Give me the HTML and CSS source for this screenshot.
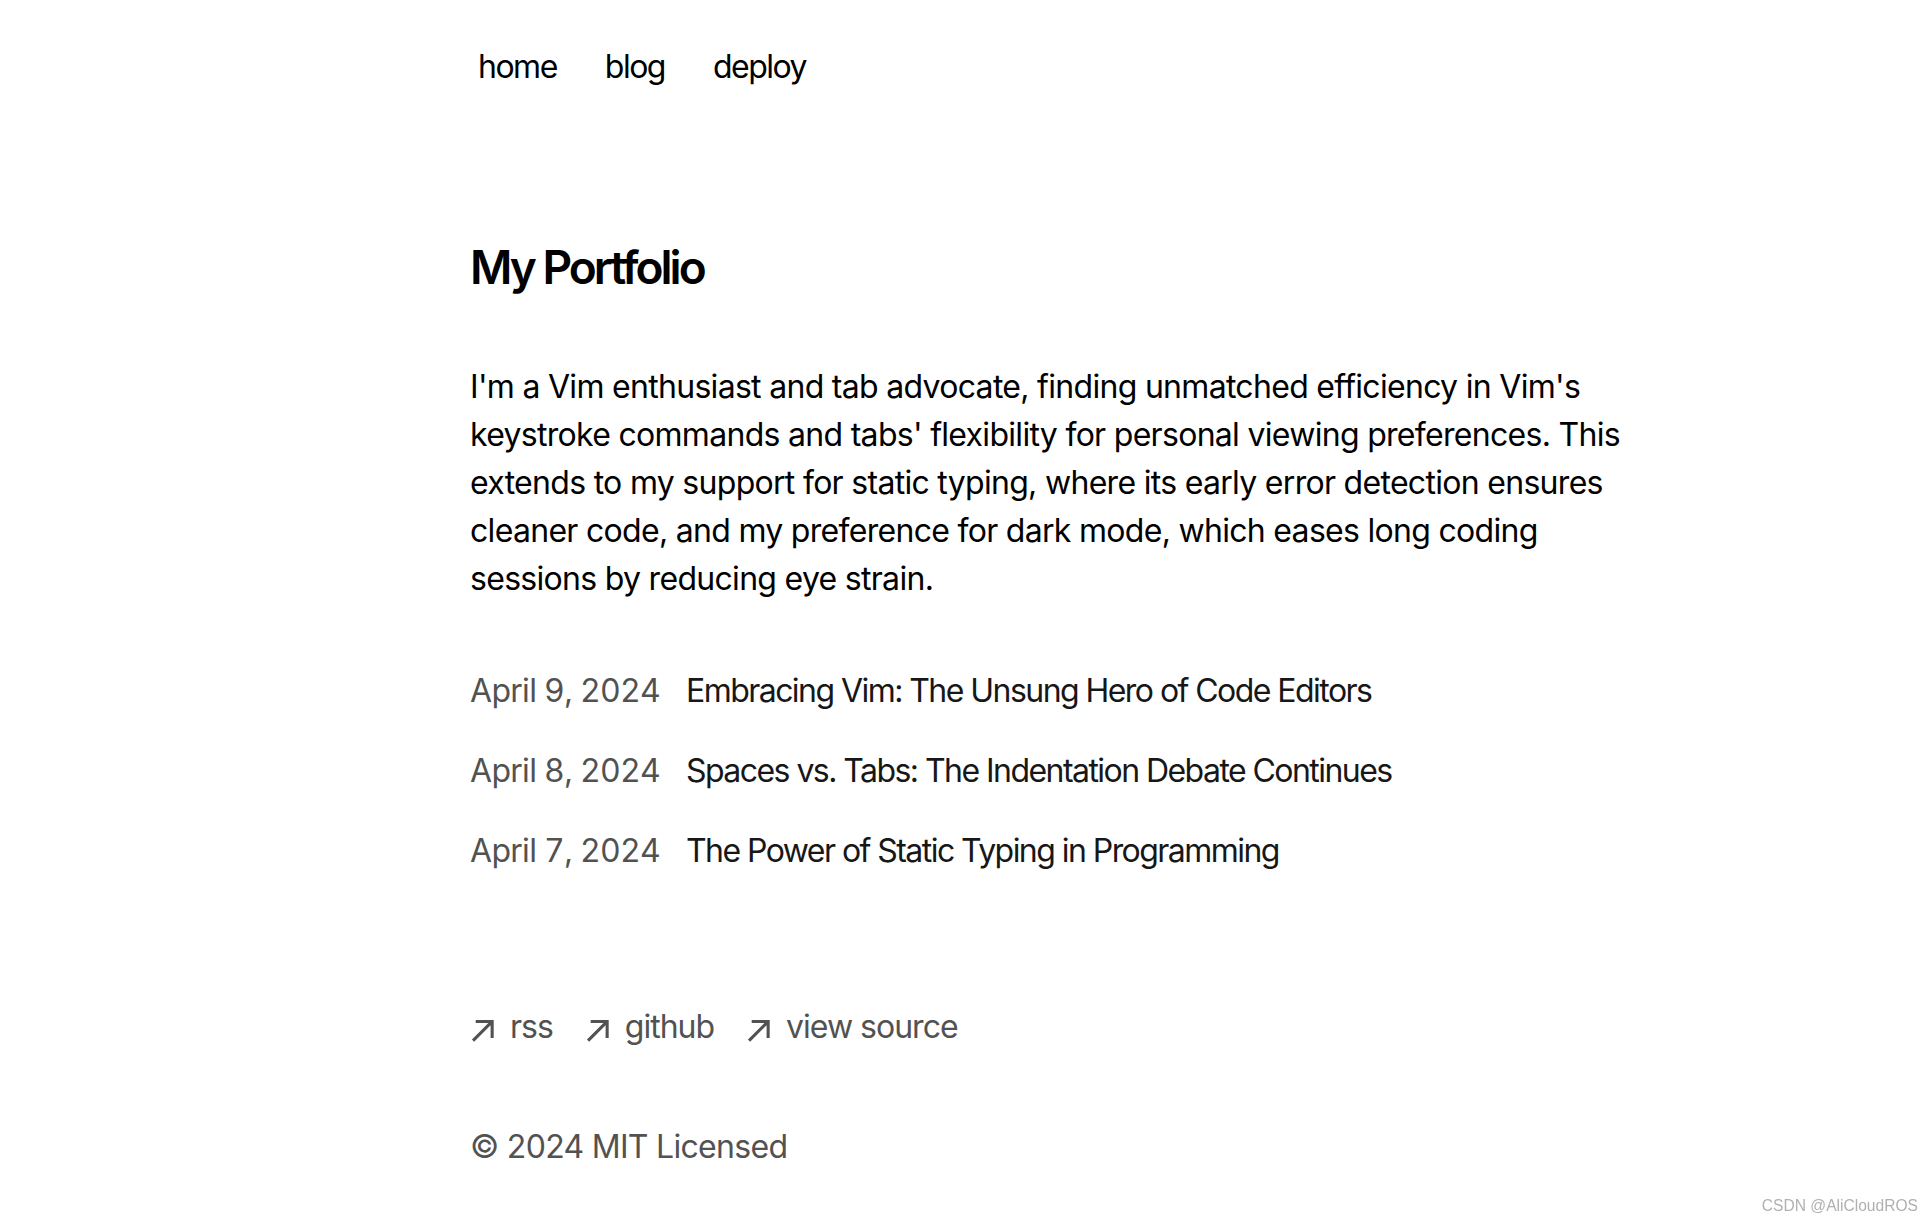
FILE: index.html
```html
<!DOCTYPE html>
<html lang="en">
<head>
    <meta charset="UTF-8">
    <meta name="viewport" content="width=device-width, initial-scale=1.0">
    <title>My Portfolio</title>
    <link rel="stylesheet" href="styles.css">
</head>
<body>

<main class="page">
    <aside class="top">
        <nav class="nav">
            <a href="#" class="nav-link">home</a>
            <a href="#" class="nav-link">blog</a>
            <a href="#" class="nav-link">deploy</a>
        </nav>
    </aside>

    <section>
        <h1 class="title">My Portfolio</h1>
        <p class="intro">I'm a Vim enthusiast and tab advocate, finding unmatched efficiency in Vim's keystroke commands and tabs' flexibility for personal viewing preferences. This extends to my support for static typing, where its early error detection ensures cleaner code, and my preference for dark mode, which eases long coding sessions by reducing eye strain.</p>

        <div class="posts">
            <a href="#" class="post">
                <span class="post-date">April 9, 2024</span>
                <span class="post-title">Embracing Vim: The Unsung Hero of Code Editors</span>
            </a>
            <a href="#" class="post">
                <span class="post-date">April 8, 2024</span>
                <span class="post-title">Spaces vs. Tabs: The Indentation Debate Continues</span>
            </a>
            <a href="#" class="post">
                <span class="post-date">April 7, 2024</span>
                <span class="post-title">The Power of Static Typing in Programming</span>
            </a>
        </div>
    </section>

    <footer class="footer">
        <ul class="footer-links">
            <li>
                <a href="#" class="footer-link">
                    <svg class="arrow" width="24" height="24" viewBox="0 0 12 12" fill="none"><path d="M2.07102 11.3494L0.963068 10.2415L9.2017 1.98864H2.83807L2.85227 0.454545H11.8438V9.46023H10.2955L10.3097 3.09659L2.07102 11.3494Z" fill="currentColor"/></svg>
                    <p>rss</p>
                </a>
            </li>
            <li>
                <a href="#" class="footer-link">
                    <svg class="arrow" width="24" height="24" viewBox="0 0 12 12" fill="none"><path d="M2.07102 11.3494L0.963068 10.2415L9.2017 1.98864H2.83807L2.85227 0.454545H11.8438V9.46023H10.2955L10.3097 3.09659L2.07102 11.3494Z" fill="currentColor"/></svg>
                    <p>github</p>
                </a>
            </li>
            <li>
                <a href="#" class="footer-link">
                    <svg class="arrow" width="24" height="24" viewBox="0 0 12 12" fill="none"><path d="M2.07102 11.3494L0.963068 10.2415L9.2017 1.98864H2.83807L2.85227 0.454545H11.8438V9.46023H10.2955L10.3097 3.09659L2.07102 11.3494Z" fill="currentColor"/></svg>
                    <p>view source</p>
                </a>
            </li>
        </ul>
        <p class="copy">© 2024 MIT Licensed</p>
    </footer>
</main>

<div class="watermark">CSDN @AliCloudROS</div>

</body>
</html>
```

FILE: styles.css
```css
body {
    margin: 0;
    padding-top: 27px;
    background-color: #ffffff;
    color: #000000;
    font-family: Inter, "Noto Sans", sans-serif;
    font-size: 32px;
    line-height: 48px;
    letter-spacing: -0.7px;
    -webkit-font-smoothing: antialiased;
}

a {
    color: inherit;
    text-decoration: none;
}

/* page column */
.page {
    width: 1176px;
    margin-left: 470px;
}

.top {
    margin-bottom: 128px;
    letter-spacing: -1.5px;
}

.nav {
    display: flex;
    margin-left: -16px;
}

.nav-link {
    padding: 8px 16px;
    margin: 8px;
}

.title {
    margin: 0 0 64px 0;
    font-size: 46px;
    line-height: 64px;
    font-weight: 600;
    letter-spacing: -3px;
}

.intro {
    margin: 0 0 32px 0;
}

/* blog list */
.posts {
    margin: 64px 0;
}

.post {
    display: flex;
    gap: 16px;
    margin-bottom: 32px;
}

.post-date {
    width: 200px;
    color: #525252;
    font-variant-numeric: tabular-nums;
}

.post-title {
    color: #171717;
    letter-spacing: -1.55px;
}

/* footer */
.footer {
    margin: 128px 0 16px 0;
}

.footer-links {
    display: flex;
    gap: 32px;
    margin: 0;
    padding: 0;
    list-style: none;
    color: #525252;
    letter-spacing: -1px;
}

.footer-link {
    display: flex;
    align-items: center;
}

.footer-link p {
    margin: 0 0 0 16px;
    height: 56px;
}

.copy {
    margin: 64px 0 0 0;
    color: #525252;
}

.watermark {
    position: fixed;
    right: 14px;
    bottom: 6px;
    font-family: "Liberation Sans", Arial, sans-serif;
    font-size: 15.6px;
    line-height: 20px;
    letter-spacing: 0;
    color: #b0b0b0;
}
```
